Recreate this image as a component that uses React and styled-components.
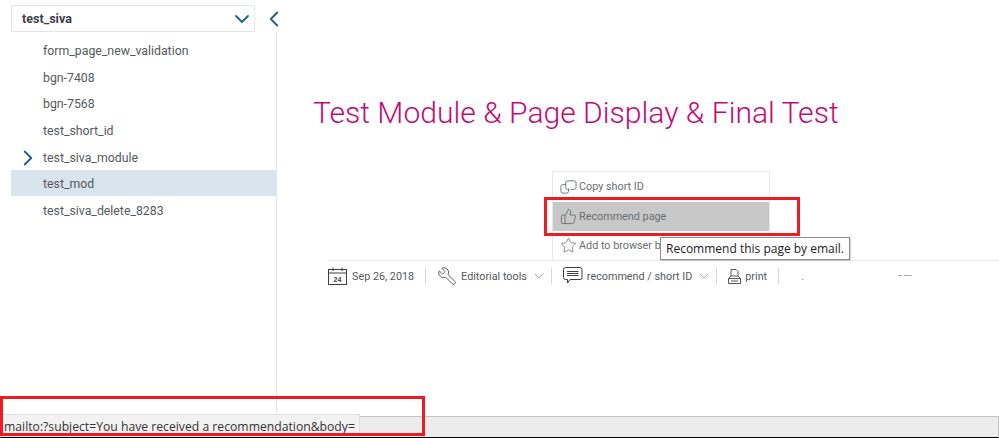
import React from 'react';
import styled, { createGlobalStyle } from 'styled-components';
import { ChevronDown, ChevronLeft, ChevronRight, Star, ThumbsUp, Wrench } from 'lucide-react';

const moduleItems = [
  { label: 'form_page_new_validation' },
  { label: 'bgn-7408' },
  { label: 'bgn-7568' },
  { label: 'test_short_id' },
  { label: 'test_siva_module', expandable: true },
  { label: 'test_mod', active: true },
  { label: 'test_siva_delete_8283' },
];

const CopyIcon = () => (
  <svg width="17" height="16" viewBox="0 0 18 16" fill="none" stroke="#6f7477" strokeWidth="1">
    <path d="M6.500 5.500H3a2 2 0 0 0-2 2v5a2 2 0 0 0 2 2h4a2 2 0 0 0 2-2V9.500" />
    <path d="M6 3.500a2 2 0 0 1 2-2h7a2 2 0 0 1 2 2v5a2 2 0 0 1-2 2h-3.500" />
    <path d="M6 3.500v5a2 2 0 0 0 2 2h2" />
  </svg>
);

const CalendarIcon = () => (
  <svg width="20" height="18" viewBox="0 0 20 18" fill="none" stroke="#3c4043" strokeWidth="1">
    <rect x="0.500" y="2.500" width="18" height="15" />
    <path d="M0.500 6H18.500M5 0.500V4M14 0.500V4" />
    <text x="9.500" y="15" fontSize="7" fontWeight="700" fontFamily="Liberation Sans, sans-serif" fill="#3c4043" stroke="none" textAnchor="middle">24</text>
  </svg>
);

const CommentIcon = () => (
  <svg width="20" height="18" viewBox="0 0 20 18" fill="none" stroke="#3c4043" strokeWidth="1">
    <path d="M2.500 0.500H17a2 2 0 0 1 2 2v8a2 2 0 0 1-2 2H7l-2.500 3.500V12.500H2.500a2 2 0 0 1-2-2v-8a2 2 0 0 1 2-2z" />
    <path d="M4 4.500H15.500M4 6.500H15.500M4 8.500H15.500" />
  </svg>
);

const PrintIcon = () => (
  <svg width="13" height="15" viewBox="0 0 13 15" fill="none" stroke="#55595c" strokeWidth="1">
    <path d="M3 7V0.500H8L10 2.500V7" />
    <path d="M3 7L0.500 9.500V14.500H12.500V9.500L10 7Z" />
    <path d="M0.500 9.500H12.500M3 12H10" />
  </svg>
);

const App = () => (
  <Page>
    <GlobalStyle />
    <Body>
      <Sidebar>
        <SidebarHead>
          <Dropdown>
            test_siva
            <ChevronDown size={24} strokeWidth={1.800} color="#1d5f8c" />
          </Dropdown>
          <CollapseButton>
            <ChevronLeft size={26} strokeWidth={1.700} color="#1d5f8c" />
          </CollapseButton>
        </SidebarHead>
        <ModuleList>
          {moduleItems.map((item) => (
            <ModuleRow key={item.label} $active={item.active}>
              <RowArrow>
                {item.expandable && <ChevronRight size={26} strokeWidth={1.700} color="#1d5f8c" />}
              </RowArrow>
              {item.label}
            </ModuleRow>
          ))}
        </ModuleList>
      </Sidebar>
      <Main>
        <Title>Test Module &amp; Page Display &amp; Final Test</Title>
        <ShareMenu>
          <MenuItem>
            <CopyIcon />
            Copy short ID
          </MenuItem>
          <MenuItem $hover>
            <ThumbsUp size={17} strokeWidth={1} color="#55595c" />
            Recommend page
          </MenuItem>
          <MenuItem>
            <Star size={17} strokeWidth={1} color="#55595c" />
            Add to browser b
          </MenuItem>
        </ShareMenu>
        <Toolbar>
          <ToolGroup>
            <CalendarIcon />
            Sep 26, 2018
          </ToolGroup>
          <ToolGroup>
            <Wrench size={20} strokeWidth={1} color="#3c4043" style={{ transform: 'scaleX(-1)' }} />
            Editorial tools
            <ToolCaret size={16} strokeWidth={1} color="#6f7477" />
          </ToolGroup>
          <ToolGroup>
            <CommentIcon />
            recommend / short ID
            <ToolCaret size={16} strokeWidth={1} color="#6f7477" />
          </ToolGroup>
          <ToolGroup>
            <PrintIcon />
            print
          </ToolGroup>
          <Remnants>
            <span>.</span>
            <ClippedText>am</ClippedText>
          </Remnants>
        </Toolbar>
      </Main>
    </Body>
    <StatusBar />
    <LinkPreview>mailto:?subject=You have received a recommendation&amp;body=</LinkPreview>
    <Tooltip>Recommend this page by email.</Tooltip>
    <Annotation $left={544} $top={197} $width={256} $height={39} />
    <Annotation $left={0} $top={396} $width={425} $height={40} />
  </Page>
);

export default App;

const GlobalStyle = createGlobalStyle`
  html, body {
    margin: 0;
    padding: 0;
    background: #fff;
  }
  body {
    font-family: Roboto, "Liberation Sans", sans-serif;
  }
`;

const Page = styled.div`
  position: relative;
  display: flex;
  flex-direction: column;
  width: 999px;
  height: 438px;
  overflow: hidden;
  background: #fff;
`;

const Body = styled.div`
  display: flex;
  flex: 1;
  min-height: 0;
`;

const Sidebar = styled.aside`
  display: flex;
  flex-direction: column;
  width: 277px;
  flex-shrink: 0;
  padding: 5px 0 0 11px;
  box-sizing: border-box;
`;

const SidebarHead = styled.div`
  display: flex;
  align-items: center;
  height: 27px;
`;

const Dropdown = styled.div`
  display: flex;
  align-items: center;
  justify-content: space-between;
  flex-shrink: 0;
  width: 244px;
  height: 27px;
  padding: 0 0 0 10px;
  box-sizing: border-box;
  border: 1px solid #e3e6e8;
  font-size: 12.500px;
  font-weight: 700;
  color: #3b4045;
`;

const CollapseButton = styled.div`
  display: flex;
  align-items: center;
  flex-shrink: 0;
  margin-left: 6px;
`;

const ModuleList = styled.div`
  flex: 1;
  padding-top: 5px;
  border-right: 1px solid #e3e6e8;
`;

const ModuleRow = styled.div`
  display: flex;
  align-items: center;
  height: 26.570px;
  box-sizing: border-box;
  padding-top: 2px;
  font-size: 12.300px;
  color: #55595c;
  background: ${(p) => (p.$active ? '#d8e4ee' : 'transparent')};
`;

const RowArrow = styled.span`
  display: flex;
  align-items: center;
  justify-content: center;
  width: 32px;
  padding-left: 2px;
  box-sizing: border-box;
`;

const Main = styled.main`
  flex: 1;
  min-width: 0;
`;

const Title = styled.h1`
  margin: 91px 0 0 36px;
  font-size: 30.100px;
  line-height: 44px;
  font-weight: 300;
  white-space: nowrap;
  color: #c20b78;
`;

const ShareMenu = styled.div`
  width: 218px;
  height: 89px;
  margin: 36px 0 0 275px;
  box-sizing: border-box;
  border: 1px solid #e8e8e8;
  border-bottom: none;
`;

const MenuItem = styled.div`
  display: flex;
  align-items: center;
  gap: 2px;
  height: 29.500px;
  padding-left: 7px;
  font-size: 10.800px;
  color: #6a6e71;
  background: ${(p) => (p.$hover ? '#c8c8c8' : 'transparent')};
`;

const Toolbar = styled.div`
  display: flex;
  align-items: center;
  height: 30px;
  margin-left: 51px;
  border-top: 1px solid #e8e8e8;
`;

const ToolGroup = styled.div`
  display: flex;
  align-items: center;
  gap: 4px;
  height: 16px;
  padding: 0 11px;
  border-right: 1px solid #d8d8d8;
  font-size: 10.800px;
  white-space: nowrap;
  color: #55595c;

  &:first-child {
    padding-left: 0;
  }
`;

const ToolCaret = styled(ChevronDown)`
  margin-right: -7px;
`;

const Remnants = styled.div`
  display: flex;
  align-items: center;
  gap: 93px;
  margin-left: 22px;
  font-size: 11px;
  color: #8a8d90;
`;

const ClippedText = styled.span`
  display: block;
  height: 5px;
  margin-top: -6px;
  line-height: 14px;
  overflow: hidden;
`;

const StatusBar = styled.div`
  flex-shrink: 0;
  height: 22px;
  box-sizing: border-box;
  background: #ececec;
  border: 1px solid #c4c4c4;
  border-bottom: 1px solid #000;
`;

const LinkPreview = styled.div`
  position: absolute;
  left: 0;
  top: 414px;
  height: 22px;
  width: 360px;
  box-sizing: border-box;
  padding-left: 4px;
  background: #f2f2f2;
  border-top: 1px solid #e0e0e0;
  border-right: 1px solid #e0e0e0;
  font-family: "Open Sans", sans-serif;
  font-size: 12.200px;
  line-height: 23px;
  white-space: nowrap;
  color: #333;
`;

const Tooltip = styled.div`
  position: absolute;
  left: 660px;
  top: 237px;
  height: 23px;
  box-sizing: border-box;
  padding: 0 5px;
  background: #fff;
  border: 1px solid #8c8c8c;
  box-shadow: 1px 1px 1px rgba(0, 0, 0, 0.150);
  font-family: "Open Sans", sans-serif;
  font-size: 12px;
  line-height: 22px;
  white-space: nowrap;
  color: #222;
`;

const Annotation = styled.div`
  position: absolute;
  left: ${(p) => p.$left}px;
  top: ${(p) => p.$top}px;
  width: ${(p) => p.$width}px;
  height: ${(p) => p.$height}px;
  box-sizing: border-box;
  border: 3px solid #ed1c24;
`;
